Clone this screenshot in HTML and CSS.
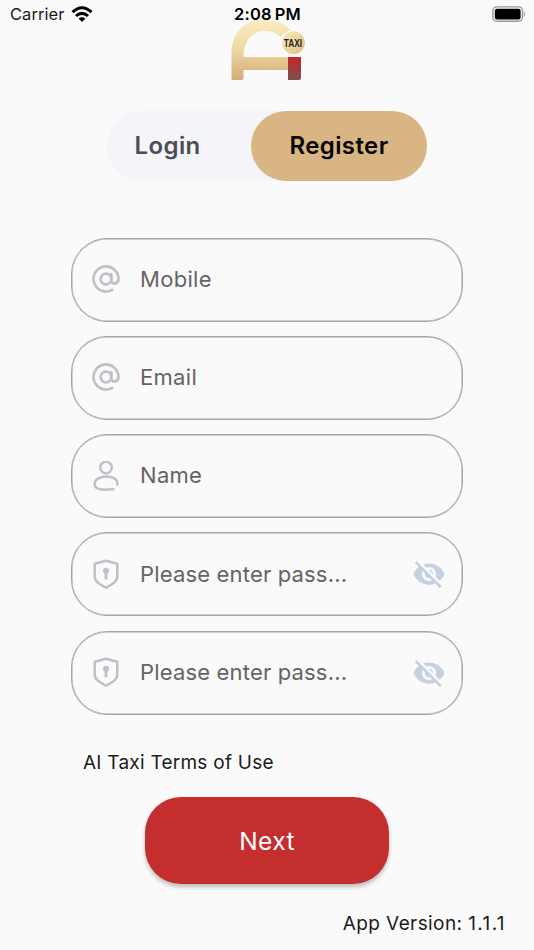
FILE: index.html
```html
<!DOCTYPE html>
<html lang="en">
<head>
<meta charset="utf-8">
<title>Register</title>
<link rel="stylesheet" href="styles.css">
</head>
<body>
<svg class="defs" aria-hidden="true">
  <symbol id="at" viewBox="0 0 30 30"><g fill="none" stroke="#bfc0c8" stroke-width="2.7" stroke-linecap="round"><circle cx="15" cy="15" r="5.3"/><path d="M20.3 10.2v6.2c0 4.4 7.2 4 7.2-1.4A12.5 12.5 0 1 0 21.2 25.8"/></g></symbol>
  <symbol id="user" viewBox="0 0 30 30"><g fill="none" stroke="#bfc0c8" stroke-width="2.5" stroke-linecap="round"><circle cx="15" cy="6.6" r="5.8"/><path d="M26.4 23.6C27.7 12.6 3.9 13.2 3.6 22.8C3.5 29 12 29.2 22.4 28.2"/></g></symbol>
  <symbol id="shield" viewBox="0 0 30 30"><path d="M15 1.8 26.3 4.7V17.5C26.3 22.5 21.3 25.2 15 28.7C8.7 25.2 3.7 22.5 3.7 17.5V4.7Z" fill="none" stroke="#bfc0c8" stroke-width="2.5" stroke-linejoin="round"/><circle cx="15" cy="11.8" r="3" fill="#bfc0c8"/><path d="M15 12v7.2" stroke="#bfc0c8" stroke-width="2.8" stroke-linecap="round"/></symbol>
  <symbol id="eye-off" viewBox="0 0 24 24"><path fill="#c5d0e0" d="M12 7c2.76 0 5 2.24 5 5 0 .65-.13 1.26-.36 1.83l2.92 2.92c1.51-1.26 2.7-2.89 3.43-4.75-1.73-4.39-6-7.5-11-7.5-1.4 0-2.74.25-3.98.7l2.16 2.16C10.74 7.13 11.35 7 12 7zM2 4.27l2.28 2.28.46.46C3.08 8.3 1.78 10.02 1 12c1.73 4.39 6 7.5 11 7.5 1.55 0 3.03-.3 4.38-.84l.42.42L19.73 22 21 20.73 3.27 3 2 4.27zM7.53 9.8l1.55 1.55c-.05.21-.08.43-.08.65 0 1.66 1.34 3 3 3 .22 0 .44-.03.65-.08l1.55 1.55c-.67.33-1.41.53-2.2.53-2.76 0-5-2.24-5-5 0-.79.2-1.53.53-2.2zm4.31-.78l3.15 3.15.02-.16c0-1.66-1.34-3-3-3l-.17.01z"/></symbol>
</svg>
<div class="screen">
  <header class="status">
    <div class="carrier"><span>Carrier</span>
      <svg class="wifi" viewBox="0 0 22 17"><g fill="none" stroke="#000" stroke-width="3"><path d="M1.5 6.1Q11-2.7 20.5 6.1"/><path d="M5 10Q11 4.7 17 10"/></g><path d="M7.6 12.5Q11 9.9 14.4 12.5L11 16Z"/></svg>
    </div>
    <div class="clock">2:08<span class="pm">PM</span></div>
    <svg class="battery" viewBox="0 0 34 17"><rect x=".9" y=".9" width="29.6" height="14.4" rx="4" fill="none" stroke="#999" stroke-width="1.4"/><rect x="2.8" y="2.8" width="25.8" height="10.6" rx="2.2"/><path d="M32 5.3q2.2 2.8 0 5.6z" fill="#999"/></svg>
  </header>
  <svg class="logo" viewBox="0 0 86 64">
    <defs>
      <linearGradient id="gold" x1="0" y1="0" x2="0" y2="1"><stop offset="0" stop-color="#fbedbe"/><stop offset=".45" stop-color="#f0daa6"/><stop offset="1" stop-color="#d2ad75"/></linearGradient>
      <linearGradient id="ball" x1="0" y1="0" x2="1" y2="1"><stop offset="0" stop-color="#faecbd"/><stop offset="1" stop-color="#dfbd84"/></linearGradient>
      <linearGradient id="red" x1="0" y1="0" x2="0" y2="1"><stop offset="0" stop-color="#c9242b"/><stop offset="1" stop-color="#77534d"/></linearGradient>
    </defs>
    <g transform="translate(5 0)">
      <path fill="url(#gold)" d="M2.5 62V36C2.5 14 16 1.5 35 1.5C47 1.5 56 5.5 61.5 12C57 14 54 15.5 51.5 19C47 14.5 42 13 36 13C22.5 13 14.5 24 14.5 39H59V52H14.5V60Q14.5 62 12.5 62Z"/>
      <path fill="url(#red)" d="M59 39H72V60Q72 62 70 62H59Z"/>
      <circle cx="64.5" cy="24.7" r="11.4" fill="url(#ball)"/>
      <text class="logo-text" transform="translate(54.8 29) scale(.76 1)">TAXI</text>
    </g>
  </svg>
  <nav class="tabs"><div class="tab">Login</div><div class="tab active">Register</div></nav>
  <form class="fields">
    <div class="field"><svg class="icon"><use href="#at"/></svg><span class="label">Mobile</span></div>
    <div class="field"><svg class="icon"><use href="#at"/></svg><span class="label">Email</span></div>
    <div class="field"><svg class="icon"><use href="#user"/></svg><span class="label">Name</span></div>
    <div class="field"><svg class="icon"><use href="#shield"/></svg><span class="label password">Please enter pass...</span><svg class="eye"><use href="#eye-off"/></svg></div>
    <div class="field"><svg class="icon"><use href="#shield"/></svg><span class="label password">Please enter pass...</span><svg class="eye"><use href="#eye-off"/></svg></div>
  </form>
  <div class="terms">AI Taxi Terms of Use</div>
  <div class="next">Next</div>
  <footer class="version">App Version: <span class="number">1.1.1</span></footer>
</div>
</body>
</html>
```
FILE: styles.css
```css
* { box-sizing: border-box; }
body { margin: 0; background: #fafafa; font-family: Inter, "Liberation Sans", sans-serif; color: #1b1b1b; }
.defs { position: absolute; width: 0; height: 0; }
.screen { width: 534px; height: 950px; overflow: hidden; display: flex; flex-direction: column; align-items: center; }
.status { width: 100%; height: 18px; flex: none; display: grid; grid-template-columns: 1fr auto 1fr; align-items: start; padding: 4px 8px 0 10px; position: relative; z-index: 1; }
.carrier { display: flex; gap: 7px; font-size: 16.5px; line-height: 20px; letter-spacing: .05px; }
.wifi { width: 22px; height: 17px; margin-top: 2px; }
.clock { font-size: 16.5px; line-height: 20px; font-weight: 600; letter-spacing: .2px; color: #000; margin-right: 1px; }
.pm { margin-left: 3px; }
.battery { width: 34px; height: 17px; justify-self: end; margin-top: 1.5px; }
.logo { width: 86px; height: 64px; flex: none; display: block; }
.logo-text { font: 700 11px "Liberation Sans", sans-serif; fill: #222; }
.tabs { width: 320px; height: 70px; flex: none; margin-top: 29px; border-radius: 35px; background: #f4f5fb; display: flex; font-size: 24px; font-weight: 600; letter-spacing: .4px; }
.tab { width: 144px; padding-left: 27.5px; line-height: 70px; color: #4e4e52; }
.tab.active { width: 176px; padding: 0; text-align: center; border-radius: 35px; background: #d8b582; color: #080602; }
.fields { width: 392px; margin-top: 56.5px; display: flex; flex-direction: column; gap: 14.3px; flex: none; }
.field { height: 84px; border: 1px solid #a6a6a6; box-shadow: inset 0 0 0 .5px #a6a6a6; border-radius: 36px; display: flex; align-items: center; padding: 0 16.5px 0 19px; font-size: 22px; letter-spacing: .3px; color: #646464; }
.label { margin-top: -1.5px; }
.password { letter-spacing: .17px; }
.icon { width: 30px; height: 30px; margin: -1px 19px 0 0; }
.eye { width: 34px; height: 34px; margin-left: auto; }
.terms { align-self: flex-start; margin: 35px 0 0 83px; font-size: 19px; line-height: 26px; letter-spacing: .25px; }
.next { width: 244px; height: 87px; flex: none; margin-top: 21px; border-radius: 36px; background: #c52e2e; color: #fff; font-size: 24.5px; line-height: 88px; letter-spacing: .4px; text-align: center; box-shadow: 0 3px 4px rgba(0,0,0,.25); }
.version { align-self: flex-end; margin: 27px 28px 0 0; font-size: 19px; line-height: 26px; letter-spacing: .4px; }
.number { letter-spacing: 1.4px; }
```
